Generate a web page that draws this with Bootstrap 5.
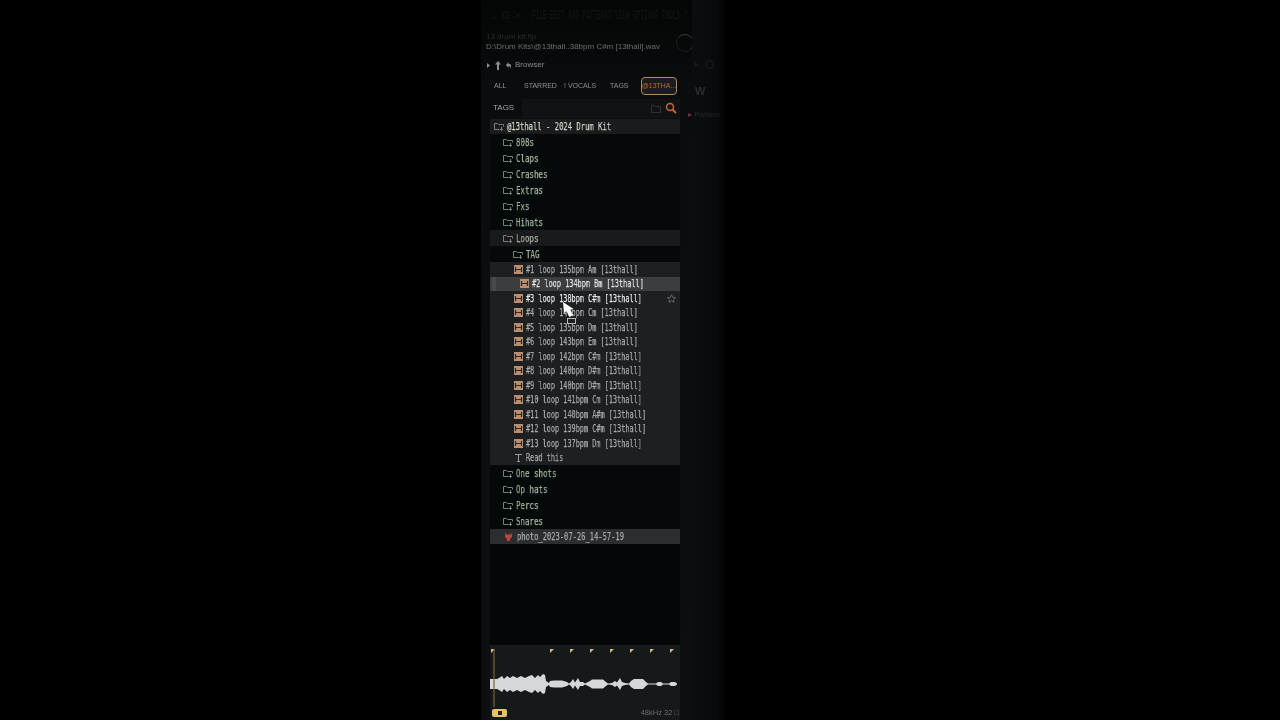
<!DOCTYPE html>
<html lang="en">
<head>
  <meta charset="UTF-8" />
  <title>Browser</title>
  <link href="https://cdn.jsdelivr.net/npm/bootstrap@5.3.2/dist/css/bootstrap.min.css" rel="stylesheet">
  <style>
    html, body { height: 720px; overflow: hidden; background: #000; }
    body { font-family: "DejaVu Sans Mono", monospace; }
    .stage { width: 1280px; height: 720px; padding-left: 481px; }
    .app-col { width: 211px; height: 720px; background: linear-gradient(#040505, #0a0c0d 12%, #0c0e0f 100%); filter: blur(.4px); }
    .side-pane { width: 34px; height: 720px; background: linear-gradient(90deg, #0b0d0e, #090a0b 70%, #020202); filter: blur(.4px); }

    .squeeze { display: inline-block; transform: scaleX(.625); transform-origin: left center; white-space: nowrap; font-size: 11px; line-height: 1; width: 0; will-change: transform; -webkit-text-stroke: .25px currentColor; }
    .title-bar { height: 29px; padding-left: 10px; color: #141516; }
    .title-bar .squeeze { font-size: 12px; transform: scaleX(.5); margin-left: 11px; }
    .file-info { height: 26px; padding: 3px 0 0 5px; font-family: "Liberation Sans", sans-serif; font-size: 8px; line-height: 10px; }
    .file-name { color: #2a2c2d; }
    .file-path { color: #6b6d6e; white-space: nowrap; }
    .knob { width: 18px; height: 18px; border: 1px solid #1c1e1f; border-top-color: #3c3e3f; border-right-color: #343637; border-radius: 50%; margin: 2px 0 0 16px; flex: 0 0 auto; }
    .browser-bar { height: 20px; padding-left: 6px; color: #8b8d8e; font-family: "Liberation Sans", sans-serif; font-size: 8px; gap: 4px; }
    .tab-bar { height: 22px; padding-left: 13px; color: #8f9192; font-family: "Liberation Sans", sans-serif; font-size: 7px; white-space: nowrap; }
    .tab-active { width: 36px; height: 18px; border: 1px solid #b08a66; border-radius: 4px; color: #b8683a; background: #1b1c1c; font-size: 7px; overflow: hidden; }
    .tag-bar { height: 22px; margin-left: 9px; width: 190px; padding: 0 3px; color: #a2a4a5; font-family: "Liberation Sans", sans-serif; font-size: 8px; }
    .tag-fill { flex: 1 1 auto; height: 19px; margin: 0 -3px 0 8px; padding-right: 3px; background: #101213; }
    .tree-head { height: 15px; margin-left: 9px; width: 190px; background: #191b1c; color: #cdd8c9; padding-left: 4px; }
    .tree-head .squeeze { transform: scaleX(.655); }
    .tree { width: 190px; margin-left: 9px; }
    .folder-row { height: 16px; background: #05090a; color: #a5b2a0; padding-left: 13px; }
    .folder-row .squeeze { transform: scaleX(.68); }
    .folder-row.open { background: #181a1b; }
    .folder-row.sub { padding-left: 23px; }
    .file-row { height: 14.5px; background: #1d1f20; color: #a8aaa9; padding-left: 24px; }
    .file-row .row-ico { margin-right: 3px; }
    .file-row.selected { background: linear-gradient(90deg, #3b3d3e 2px, #484a4b 2px, #484a4b 6px, #3b3d3e 6px); color: #e2e2e0; padding-left: 30px; }
    .file-row.hovered { color: #e8e8e6; }
    .photo-row { height: 15px; background: #2b2d2e; color: #a8aaa9; padding-left: 14px; }
    .photo-row .squeeze { transform: scaleX(.646); margin-left: 1px; }
    .row-ico { flex: 0 0 auto; margin-right: 3px; }
    .tree-gap { height: 101px; width: 190px; margin-left: 9px; background: #040607; }
    .wave-panel { height: 75px; margin-left: 9px; width: 190px; background: #16191a; position: relative; }
    .wave-foot { position: absolute; left: 0; right: 0; bottom: 1px; height: 12px; padding: 0 1px 0 2px; color: #6b6d6e; font-family: "Liberation Sans", sans-serif; font-size: 7.5px; }
    .play-chip { width: 15px; height: 8px; background: #e3c565; border-radius: 2px; }
    .play-chip i { width: 4px; height: 4px; background: #222; display: block; }
    .pane-ico { color: #2a2c2d; font-size: 11px; line-height: 16px; margin: 14px 0 10px; font-family: "Liberation Sans", sans-serif; }
    .pane-pattern { color: #25262a; font-family: "Liberation Sans", sans-serif; font-size: 8px; line-height: 12px; white-space: nowrap; margin-left: -7px; }
    .pink { color: #7a2c4a; }
    .pane-stack { padding: 60px 0 0 3px; }
  </style>
</head>
<body>
  <div class="stage d-flex position-relative">
    <div class="app-col position-relative">
      <div class="title-bar d-flex align-items-center">
        <svg width="30" height="8" viewBox="0 0 30 8"><path d="M0 7h6M12 1h5v6h-5zM24 1l6 6M30 1l-6 6" fill="none" stroke="#141516"/></svg>
        <span class="squeeze">FILE EDIT ADD PATTERNS VIEW OPTIONS TOOLS ?</span>
      </div>
      <div class="file-info d-flex">
        <div>
          <div class="file-name">13 drum kit.flp</div>
          <div class="file-path">D:\Drum Kits\@13thall..38bpm C#m [13thall].wav</div>
        </div>
        <div class="knob"></div>
      </div>
      <div class="browser-bar d-flex align-items-center">
        <svg width="24" height="9" viewBox="0 0 24 9"><path d="M0 2l3 2.500L0 7z" fill="#8b8d8e"/><path d="M11 0l3 3.500h-2V9h-2V3.500H8z" fill="#8b8d8e"/><path d="M19 4l2.500-3v2c3 0 3.500 2 2.500 5-.5-2-1-3-2.500-3v2z" fill="#8b8d8e"/></svg>
        <span>Browser</span>
      </div>
      <div class="tab-bar d-flex align-items-center">
        <span style="width:30px">ALL</span>
        <span style="width:40px">STARRED</span>
        <span style="width:46px">! VOCALS</span>
        <span style="width:31px">TAGS</span>
        <span class="tab-active d-flex align-items-center justify-content-center">@13THA...</span>
      </div>
      <div class="tag-bar d-flex align-items-center">
        <span>TAGS</span>
        <span class="tag-fill d-flex align-items-center justify-content-end gap-1">
          <svg width="10" height="9" viewBox="0 0 10 9"><path d="M.5 1.500h3l1 1h5v6h-9z" fill="none" stroke="#33302a"/></svg>
          <svg width="12" height="12" viewBox="0 0 12 12"><circle cx="5" cy="5" r="3.500" fill="none" stroke="#c06a35" stroke-width="1.500"/><path d="M7.500 7.500L11 11" stroke="#c06a35" stroke-width="2"/></svg>
        </span>
      </div>
      <div class="tree-head d-flex align-items-center" id="tree-head"></div>
      <div class="tree" id="tree"></div>
      <div class="tree-gap"></div>
      <div class="wave-panel" id="wave"></div>
    </div>
    <div class="side-pane position-relative">
      <div class="pane-stack d-flex flex-column">
        <svg width="24" height="9" viewBox="0 0 24 9"><path d="M0 2l3 2.500L0 7z" fill="#1b1c1d"/><rect x="11" y="1" width="7" height="7" rx="2" fill="none" stroke="#1b1c1d"/></svg>
        <span class="pane-ico fw-bold">W</span>
        <span class="pane-pattern"><span class="pink">&#9656;</span> Pattern</span>
      </div>
    </div>
    <svg class="position-absolute" style="left:562px;top:301px" width="16" height="26" viewBox="0 0 16 26">
      <path d="M1 1l1 11 2.500-2 3 6 3.500-2-3-5.500 3.500-.5z" fill="#fff"/>
      <rect x="5.500" y="17.500" width="8" height="5" fill="none" stroke="#bbb"/>
    </svg>
  </div>

  <script>
    const FOLDER = '<svg class="row-ico" width="10" height="9" viewBox="0 0 10 9"><path d="M.5 7.500v-6h3l1 1h5v2M.5 7.500h5M7.500 5v3.500M6 7l1.500 1.500L9 7" fill="none" stroke="#75827a"/></svg>';
    const AUDIO = '<svg class="row-ico" width="9" height="9" viewBox="0 0 9 9"><rect width="9" height="9" fill="#b98f70"/><path d="M1.500 2v5M7.500 2v5M2 4.500h5" stroke="#3a2418" stroke-width="1.200"/></svg>';
    const TEXT = '<svg class="row-ico" width="9" height="10" viewBox="0 0 9 10"><path d="M1 1.500h7M4.500 1.500v7M3 8.500h3" fill="none" stroke="#999"/></svg>';
    const PHOTO = '<svg class="row-ico" width="9" height="10" viewBox="0 0 9 10"><path d="M1 1l2 2 1.500-1L6 3l2-2v4L6 7v2H3V7L1 5z" fill="#b8463c"/></svg>';
    const STAR = '<svg class="ms-auto me-1" width="9" height="9" viewBox="0 0 10 10"><path d="M5 .8l1.300 2.900 3.100.3-2.300 2.100.7 3.100L5 7.600 2.200 9.200l.7-3.100L.6 4l3.100-.3z" fill="none" stroke="#6a6c6d"/></svg>';

    const label = t => `<span class="squeeze">${t}</span>`;
    document.getElementById('tree-head').innerHTML = FOLDER + label('@13thall - 2024 Drum Kit');

    const before = ['808s', 'Claps', 'Crashes', 'Extras', 'Fxs', 'Hihats'];
    const loops = [
      '#1 loop 135bpm Am [13thall]', '#2 loop 134bpm Bm [13thall]', '#3 loop 138bpm C#m [13thall]',
      '#4 loop 140bpm Cm [13thall]', '#5 loop 135bpm Dm [13thall]', '#6 loop 143bpm Em [13thall]',
      '#7 loop 142bpm C#m [13thall]', '#8 loop 140bpm D#m [13thall]', '#9 loop 140bpm D#m [13thall]',
      '#10 loop 141bpm Cm [13thall]', '#11 loop 140bpm A#m [13thall]', '#12 loop 139bpm C#m [13thall]',
      '#13 loop 137bpm Dm [13thall]'
    ];
    const after = ['One shots', 'Op hats', 'Percs', 'Snares'];

    const folderRow = (name, cls = '') => `<div class="folder-row d-flex align-items-center ${cls}">${FOLDER}${label(name)}</div>`;
    let html = before.map(n => folderRow(n)).join('');
    html += folderRow('Loops', 'open') + folderRow('TAG', 'sub');
    loops.forEach((name, i) => {
      const cls = i === 1 ? 'selected' : i === 2 ? 'hovered' : '';
      html += `<div class="file-row d-flex align-items-center ${cls}">${AUDIO}${label(name)}${i === 2 ? STAR : ''}</div>`;
    });
    html += `<div class="file-row d-flex align-items-center">${TEXT}${label('Read this')}</div>`;
    html += after.map(n => folderRow(n)).join('');
    html += `<div class="photo-row d-flex align-items-center">${PHOTO}${label('photo_2023-07-26_14-57-19')}</div>`;
    document.getElementById('tree').innerHTML = html;

    // waveform: half heights read off the zoomed reference, mirrored around the middle line
    const env = [[0,5],[7,5],[9,6],[12,8],[14,5],[17,8],[20,6],[23,8],[27,6],[31,8],[35,6],[39,8],[42,9],[45,6],[48,9],[50,7],[53,10],[55,9],[56,3],[59,1],
      [60,3],[64,3.500],[72,3.500],[77,2],[79,.6],[81,2],[83,5],[85,1.500],[88,6],[90,2],[93,2],[95,.6],[100,3],[102,4.500],[113,4.500],[116,2],[118,.6],[122,1],[125,3],[127,1.500],[130,6],[132,2],[135,1],[139,.6],[141,3],[144,5],[153,5],[156,2],[158,.6],[166,.6],[168,2],[171,2],[173,.6],[179,.6],[181,2],[185,2],[187,.5]];
    const upper = env.map(p => `${p[0]},${39 - p[1]} `).join('');
    const lower = env.slice().reverse().map(p => `${p[0]},${39 + p[1]} `).join('');
    const flags = [1, 60, 80, 100, 120, 140, 160, 180].map(x => `<path d="M${x} 4h4l-4 4z" fill="#d9b98a"/>`).join('');
    document.getElementById('wave').innerHTML = `
      <svg class="d-block" width="190" height="62" viewBox="0 0 190 62">
        <polygon points="${upper}${lower}" fill="#d5d8d8"/>
        ${flags}
        <rect x="3" y="4" width="2" height="58" fill="#7a6238" opacity=".6"/>
      </svg>
      <div class="wave-foot d-flex align-items-center justify-content-between">
        <span class="play-chip d-flex align-items-center justify-content-center"><i></i></span>
        <span>48kHz 32 &#9633;</span>
      </div>`;
  </script>
  <script src="https://cdn.jsdelivr.net/npm/bootstrap@5.3.2/dist/js/bootstrap.bundle.min.js"></script>
</body>
</html>
